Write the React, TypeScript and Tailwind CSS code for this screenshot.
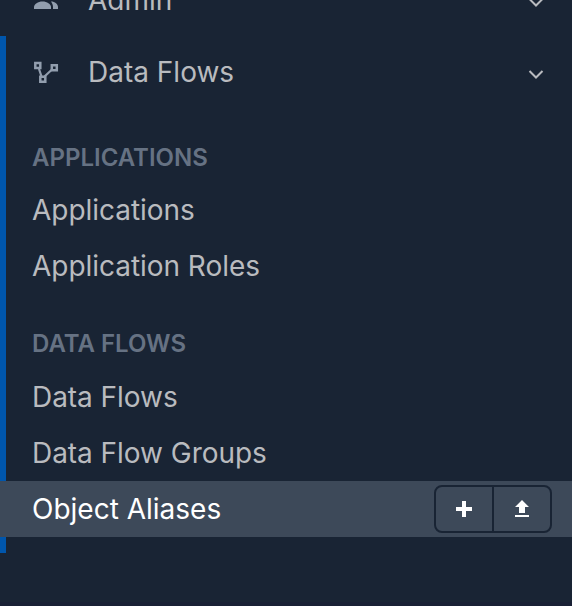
import React from "react";

const Chevron = () => (
  <svg className="mt-1 h-4 w-4" viewBox="0 0 16 16" fill="none" stroke="#b9bbbf" strokeWidth="2">
    <path d="M1.5 5 8 11.5 14.5 5" />
  </svg>
);

function MenuHeader({ label, icon }: { label: string; icon: React.ReactNode }) {
  return (
    <div className="flex h-[72px] shrink-0 items-center pr-7 pl-8">
      <span className="mr-7 h-7 w-7">{icon}</span>
      <span className="flex-1">{label}</span>
      <Chevron />
    </div>
  );
}

const Heading = ({ children }: { children: React.ReactNode }) => (
  <h3 className="flex h-12 items-center pl-[26px] text-[24px] font-semibold text-[#667283]">{children}</h3>
);

const Item = ({ children }: { children: React.ReactNode }) => (
  <li className="flex h-14 items-center pl-[26px] tracking-[-0.04px]">{children}</li>
);

export default function App() {
  return (
    <nav className="h-[606px] w-[572px] overflow-hidden border-b-4 border-[#192035] bg-[#192434] font-['Inter',sans-serif] text-[28px] font-[380] whitespace-nowrap text-[#b9bbbf]">
      <div className="-mt-9">
        <MenuHeader
          label="Admin"
          icon={
            <svg viewBox="0 0 28 28" className="h-7 w-7" fill="#929eae">
              <circle cx="10" cy="9" r="4" />
              <path d="M2 23v-2c0-3 4-5.500 8.500-5.500s8.500 2.500 8.500 5.500v2z" />
              <path d="M19 15.500c4 0 7 2.500 7 5.500v2h-5v-2c0-2-1-4-2-5.500z" />
            </svg>
          }
        />
      </div>
      <div className="flex h-[517px] flex-col">
        <div className="border-l-[6px] border-[#0056ac]">
          <div className="-ml-1.5">
            <MenuHeader
              label="Data Flows"
              icon={
                <svg viewBox="0 0 28 28" className="h-7 w-7" fill="none" stroke="#929eae" strokeWidth="2.500">
                  <path d="M7 11 9.500 18.500M12.500 18.500 20 11.500" strokeWidth="2.200" />
                  <path d="M3.300 5h5v5h-5zM19.800 7.200h5v5h-5zM8.300 18.800h5v5h-5z" />
                </svg>
              }
            />
          </div>
          <div className="mt-[26px]">
            <Heading>APPLICATIONS</Heading>
            <ul>
              <Item>Applications</Item>
              <Item>Application Roles</Item>
            </ul>
          </div>
          <div className="mt-[26px]">
            <Heading>DATA FLOWS</Heading>
            <ul className="mt-px">
              <Item>Data Flows</Item>
              <Item>Data Flow Groups</Item>
            </ul>
          </div>
        </div>
        <div className="flex h-14 items-center justify-between bg-[#3d4959] pr-5 pl-8 text-white">
          <span>Object Aliases</span>
          <div className="flex h-12 w-[118px] rounded-lg border-2 border-[#192434]">
            <button aria-label="Add" className="flex w-14 items-center justify-center">
              <svg className="h-4 w-4" viewBox="0 0 16 16" fill="white"><path d="M6 0h4v6h6v4h-6v6H6v-6H0V6h6z" /></svg>
            </button>
            <button aria-label="Upload" className="flex flex-1 items-center justify-center border-l-2 border-[#192434]">
              <svg className="h-[18px] w-4" viewBox="0 0 16 18" fill="white"><path d="M8 0 15 7h-4v6H5V7H1zM1 15h14v2H1z" /></svg>
            </button>
          </div>
        </div>
        <div className="h-4 border-l-[6px] border-[#0056ac]" />
      </div>
    </nav>
  );
}
